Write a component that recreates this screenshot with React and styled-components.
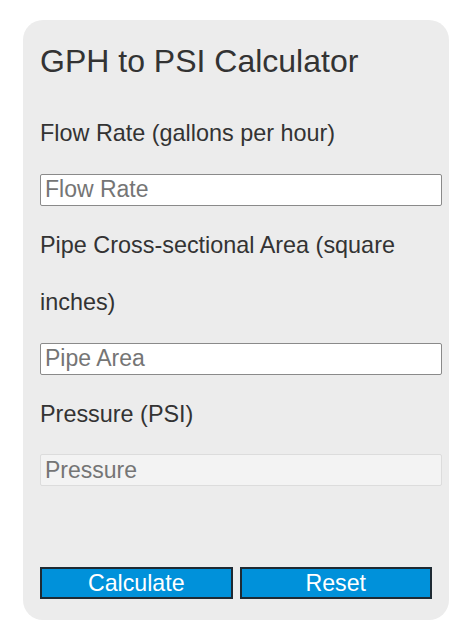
import React from "react";
import styled, { createGlobalStyle } from "styled-components";

const GlobalStyle = createGlobalStyle`
  body {
    margin: 0;
    background: #ffffff;
    font-family: "Liberation Sans", Arial, sans-serif;
  }
`;

const Card = styled.div`
  width: 426px;
  box-sizing: border-box;
  margin: 20px 0 0 23px;
  padding: 23px 17px 21px 17px;
  background: #ececec;
  border-radius: 20px;
`;

const Title = styled.h2`
  margin: 0 0 25px 0;
  font-size: 32px;
  font-weight: normal;
  line-height: 37px;
  color: #333333;
`;

const Label = styled.label`
  display: block;
  font-size: 23.4px;
  line-height: 57.6px;
  color: #333333;
`;

const Input = styled.input`
  display: block;
  width: 100%;
  height: 30px;
  margin: 11px 0;
  padding: 0 4px;
  border: 1px solid ${(p) => (p.readOnly ? "#dcdcdc" : "#8a8a8a")};
  border-radius: 2px;
  background: ${(p) => (p.readOnly ? "#f3f3f3" : "#ffffff")};
  font-family: "Liberation Sans", Arial, sans-serif;
  font-size: 23px;
  color: #333333;
  outline: none;

  &::placeholder {
    color: #757575;
  }
`;

const Actions = styled.div`
  display: flex;
  gap: 7px;
  margin-top: 81px;
`;

const Button = styled.button`
  flex: 1;
  height: 32px;
  padding: 0;
  border: 2px solid #1e2a33;
  background: #0091da;
  color: #ffffff;
  font-family: "Liberation Sans", Arial, sans-serif;
  font-size: 23.2px;
  line-height: 28px;
  cursor: pointer;
`;

const App = () => {
  return (
    <React.Fragment>
      <GlobalStyle />
      <Card>
        <Title>GPH to PSI Calculator</Title>
        <Label htmlFor="flow">Flow Rate (gallons per hour)</Label>
        <Input id="flow" type="text" placeholder="Flow Rate" />
        <Label htmlFor="area">Pipe Cross-sectional Area (square inches)</Label>
        <Input id="area" type="text" placeholder="Pipe Area" />
        <Label htmlFor="psi">Pressure (PSI)</Label>
        <Input id="psi" type="text" placeholder="Pressure" readOnly />
        <Actions>
          <Button type="button">Calculate</Button>
          <Button type="button">Reset</Button>
        </Actions>
      </Card>
    </React.Fragment>
  );
};

export default App;
